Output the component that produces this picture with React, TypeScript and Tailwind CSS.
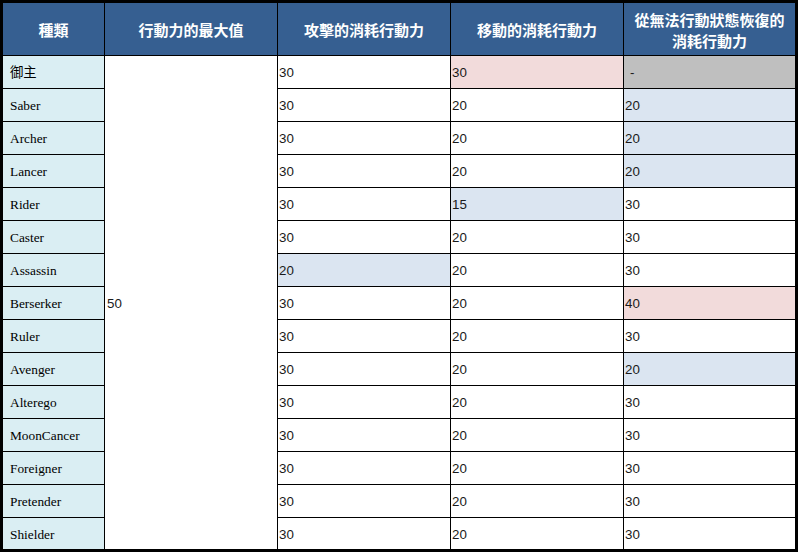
import React from "react";

type Cell = { v: string; bg?: string };

const pink = "bg-[#f2dbdb]";
const blue = "bg-[#dbe5f1]";
const grey = "bg-[#bfbfbf]";

const rows: { name: string; atk: Cell; move: Cell; recover: Cell }[] = [
  { name: "御主", atk: { v: "30" }, move: { v: "30", bg: pink }, recover: { v: "-", bg: grey } },
  { name: "Saber", atk: { v: "30" }, move: { v: "20" }, recover: { v: "20", bg: blue } },
  { name: "Archer", atk: { v: "30" }, move: { v: "20" }, recover: { v: "20", bg: blue } },
  { name: "Lancer", atk: { v: "30" }, move: { v: "20" }, recover: { v: "20", bg: blue } },
  { name: "Rider", atk: { v: "30" }, move: { v: "15", bg: blue }, recover: { v: "30" } },
  { name: "Caster", atk: { v: "30" }, move: { v: "20" }, recover: { v: "30" } },
  { name: "Assassin", atk: { v: "20", bg: blue }, move: { v: "20" }, recover: { v: "30" } },
  { name: "Berserker", atk: { v: "30" }, move: { v: "20" }, recover: { v: "40", bg: pink } },
  { name: "Ruler", atk: { v: "30" }, move: { v: "20" }, recover: { v: "30" } },
  { name: "Avenger", atk: { v: "30" }, move: { v: "20" }, recover: { v: "20", bg: blue } },
  { name: "Alterego", atk: { v: "30" }, move: { v: "20" }, recover: { v: "30" } },
  { name: "MoonCancer", atk: { v: "30" }, move: { v: "20" }, recover: { v: "30" } },
  { name: "Foreigner", atk: { v: "30" }, move: { v: "20" }, recover: { v: "30" } },
  { name: "Pretender", atk: { v: "30" }, move: { v: "20" }, recover: { v: "30" } },
  { name: "Shielder", atk: { v: "30" }, move: { v: "20" }, recover: { v: "30" } },
];

const numFont = "font-['Liberation_Sans','Noto_Sans_CJK_TC',sans-serif]";

function NumCell({ cell, dash }: { cell: Cell; dash?: boolean }) {
  return (
    <td
      className={`border border-black align-middle text-left pt-[2px] text-[13.33px] text-[#1a1a1a] ${numFont} ${
        dash ? "pl-[6px]" : "pl-[1px]"
      } ${cell.bg ?? "bg-white"}`}
    >
      {cell.v}
    </td>
  );
}

export default function App() {
  return (
    <div className="bg-white w-[800px] h-[552px]">
      <table className="table-fixed border-collapse border-[3px] border-black w-[798px]">
        <colgroup>
          <col className="w-[103px]" />
          <col className="w-[173px]" />
          <col className="w-[173px]" />
          <col className="w-[173px]" />
          <col className="w-[173px]" />
        </colgroup>
        <thead>
          <tr className="h-[54px] bg-[#365f91] text-white text-[15px] leading-[21px] font-bold font-['Noto_Sans_CJK_TC',sans-serif]">
            <th className="border border-black">種類</th>
            <th className="border border-black">行動力的最大值</th>
            <th className="border border-black">攻擊的消耗行動力</th>
            <th className="border border-black">移動的消耗行動力</th>
            <th className="border border-black pt-[2px]">
              從無法行動狀態恢復的
              <br />
              消耗行動力
            </th>
          </tr>
        </thead>
        <tbody>
          {rows.map((r, i) => (
            <tr key={r.name} className="h-[33px]">
              <td className="border border-black bg-[#daeef3] pl-[7px] pt-[2px] text-[13.33px] text-black font-['Liberation_Serif','Noto_Sans_CJK_TC',serif]">
                {r.name}
              </td>
              {i === 0 && (
                <td
                  rowSpan={rows.length}
                  className={`border border-black bg-white pl-[2px] pt-[2px] text-[13.33px] text-[#1a1a1a] ${numFont}`}
                >
                  50
                </td>
              )}
              <NumCell cell={r.atk} />
              <NumCell cell={r.move} />
              <NumCell cell={r.recover} dash={r.recover.v === "-"} />
            </tr>
          ))}
        </tbody>
      </table>
    </div>
  );
}
